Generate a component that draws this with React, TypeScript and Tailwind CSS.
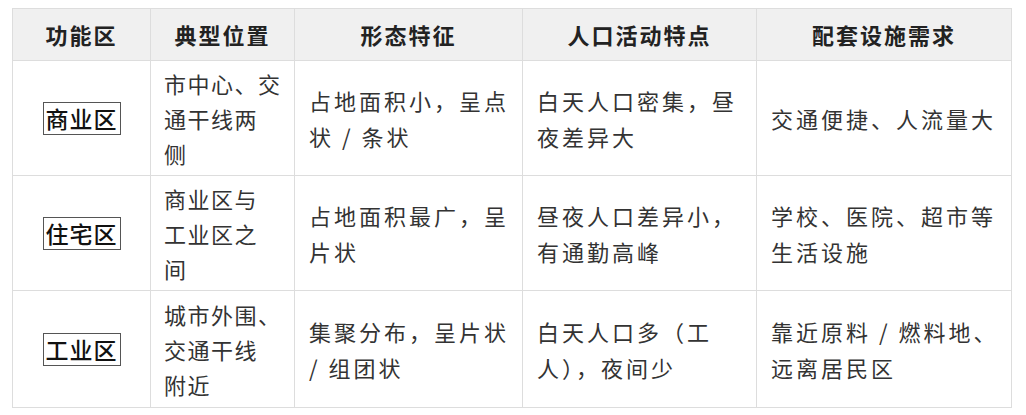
import React from 'react';

interface ZoneRow {
  name: string;
  location: string[];
  form: string[];
  activity: string[];
  facility: string[];
}

const rows: ZoneRow[] = [
  {
    name: '商业区',
    location: ['市中心、交', '通干线两', '侧'],
    form: ['占地面积小，呈点', '状 / 条状'],
    activity: ['白天人口密集，昼', '夜差异大'],
    facility: ['交通便捷、人流量大'],
  },
  {
    name: '住宅区',
    location: ['商业区与', '工业区之', '间'],
    form: ['占地面积最广，呈', '片状'],
    activity: ['昼夜人口差异小，', '有通勤高峰'],
    facility: ['学校、医院、超市等', '生活设施'],
  },
  {
    name: '工业区',
    location: ['城市外围、', '交通干线', '附近'],
    form: ['集聚分布，呈片状', '/ 组团状'],
    activity: ['白天人口多（工', '人），夜间少'],
    facility: ['靠近原料 / 燃料地、', '远离居民区'],
  },
];

const headers = ['功能区', '典型位置', '形态特征', '人口活动特点', '配套设施需求'];
const widths = ['w-[138px]', 'w-[144px]', 'w-[228px]', 'w-[234px]', 'w-[255px]'];

const Lines = ({ lines, tight }: { lines: string[]; tight?: boolean }) => (
  <div className={tight ? 'tracking-[1.5px]' : 'tracking-[3px]'}>
    {lines.map((l, i) => (
      <div key={i} className="whitespace-nowrap">
        {l}
      </div>
    ))}
  </div>
);

export default function App() {
  return (
    <div
      className="w-[1026px] h-[415px] bg-white pt-[8px] pl-[12px]"
      style={{ fontFamily: '"Noto Sans CJK SC", "Noto Sans", sans-serif' }}
    >
      <table className="border-collapse table-fixed w-[999px]">
        <thead>
          <tr className="h-[52px] bg-[#f0f0f0]">
            {headers.map((h, i) => (
              <th
                key={h}
                className={`${widths[i]} border border-[#dddddd] text-center text-[22px] font-bold text-[#222] tracking-[2px] p-0`}
              >
                {h}
              </th>
            ))}
          </tr>
        </thead>
        <tbody>
          {rows.map((r, idx) => (
            <tr key={r.name} className={idx === 2 ? 'h-[117px]' : 'h-[115px]'}>
              <td className="border border-[#dddddd] text-center align-middle p-0">
                <span className="inline-block border border-[#555] px-[2px] text-[23px] leading-[31px] font-medium text-[#111] tracking-[1px]">
                  {r.name}
                </span>
              </td>
              <td className="border border-[#dddddd] align-middle pl-[13px] pr-[4px] text-[22px] leading-[35px] text-[#333]">
                <Lines lines={r.location} tight />
              </td>
              <td className="border border-[#dddddd] align-middle pl-[14px] pr-[4px] text-[22px] leading-[36px] text-[#333]">
                <Lines lines={r.form} />
              </td>
              <td className="border border-[#dddddd] align-middle pl-[14px] pr-[4px] text-[22px] leading-[36px] text-[#333]">
                <Lines lines={r.activity} />
              </td>
              <td className="border border-[#dddddd] align-middle pl-[14px] pr-[4px] text-[22px] leading-[36px] text-[#333]">
                <Lines lines={r.facility} />
              </td>
            </tr>
          ))}
        </tbody>
      </table>
    </div>
  );
}
